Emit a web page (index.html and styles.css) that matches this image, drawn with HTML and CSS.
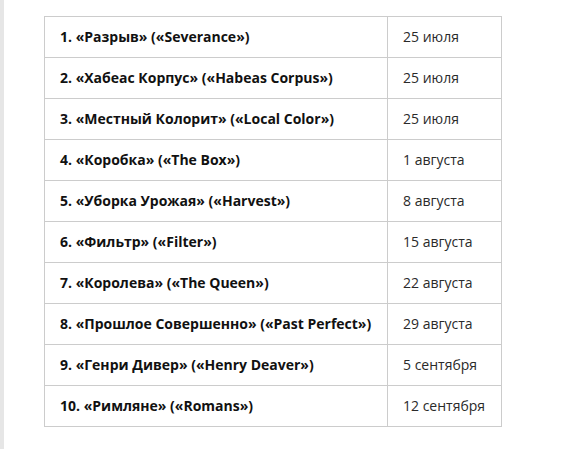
FILE: index.html
```html
<!DOCTYPE html>
<html lang="ru">
<head>
<meta charset="utf-8">
<link rel="stylesheet" href="styles.css">
</head>
<body>
<div class="page">
  <div class="strip"></div>
  <main class="content">
    <table class="episodes">
      <tbody>
        <tr><td class="title">1. «Разрыв» («Severance»)</td><td class="date">25 июля</td></tr>
        <tr><td class="title">2. «Хабеас Корпус» («Habeas Corpus»)</td><td class="date">25 июля</td></tr>
        <tr><td class="title">3. «Местный Колорит» («Local Color»)</td><td class="date">25 июля</td></tr>
        <tr><td class="title">4. «Коробка» («The Box»)</td><td class="date">1 августа</td></tr>
        <tr><td class="title">5. «Уборка Урожая» («Harvest»)</td><td class="date">8 августа</td></tr>
        <tr><td class="title">6. «Фильтр» («Filter»)</td><td class="date">15 августа</td></tr>
        <tr><td class="title">7. «Королева» («The Queen»)</td><td class="date">22 августа</td></tr>
        <tr><td class="title">8. «Прошлое Совершенно» («Past Perfect»)</td><td class="date">29 августа</td></tr>
        <tr><td class="title">9. «Генри Дивер» («Henry Deaver»)</td><td class="date">5 сентября</td></tr>
        <tr><td class="title">10. «Римляне» («Romans»)</td><td class="date">12 сентября</td></tr>
      </tbody>
    </table>
  </main>
</div>
</body>
</html>
```
FILE: styles.css
```css
html, body {
  margin: 0;
  padding: 0;
  background: #fff;
}
.page {
  display: flex;
  min-height: 449px;
  font-family: "Open Sans", "Liberation Sans", sans-serif;
}
.strip {
  width: 4px;
  background: #e6e6e6;
  flex: none;
}
.content {
  padding: 16px 0 0 40px;
}
.episodes {
  border-collapse: collapse;
  width: 458px;
}
.episodes td {
  border: 1px solid #cccccc;
  height: 41px;
  padding: 0 15px;
  box-sizing: border-box;
  font-size: 14px;
  line-height: 20px;
  vertical-align: middle;
}
.title {
  font-weight: 700;
  color: #111111;
  width: 343px;
}
.date {
  font-weight: 400;
  color: #2a2a2a;
}
```
